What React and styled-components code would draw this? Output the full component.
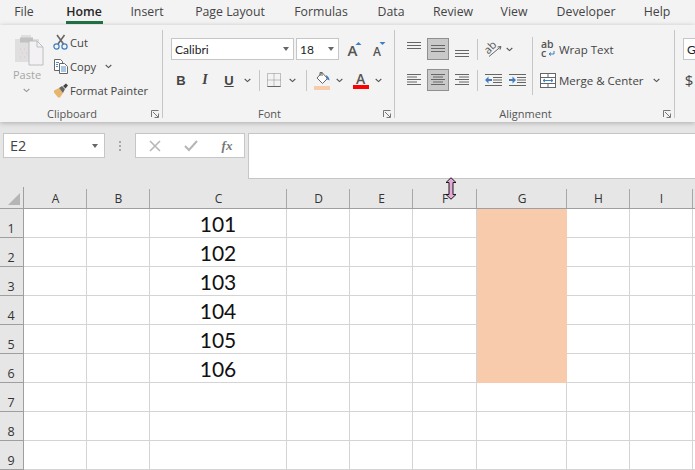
import React from "react";
import styled, { createGlobalStyle } from "styled-components";

const Global = createGlobalStyle`
  html, body { margin: 0; padding: 0; background: #fff; }
  body { width: 695px; height: 470px; overflow: hidden; font-family: "Open Sans", "Liberation Sans", sans-serif; }
  * { box-sizing: border-box; }
`;

const Page = styled.div`
  position: relative;
  width: 695px;
  height: 470px;
  overflow: hidden;
  display: flex;
  flex-direction: column;
  background: #e6e6e6;
`;

const TabBar = styled.div`
  display: flex;
  height: 25px;
  background: #f3f3f3;
  flex: none;
`;
const Tab = styled.div`
  position: relative;
  width: ${p => p.$w}px;
  flex: none;
  text-align: center;
  font-size: 12.3px;
  line-height: 24px;
  color: ${p => (p.$active ? "#262626" : "#444")};
  font-weight: ${p => (p.$active ? 600 : 400)};
  white-space: nowrap;
`;
const TabLine = styled.div`
  position: absolute;
  left: 18px;
  right: 17px;
  top: 21px;
  height: 3px;
  background: #217346;
`;

const Ribbon = styled.div`
  display: flex;
  flex: none;
  height: 97px;
  background: #f3f3f3;
  box-shadow: 0 1px 5px rgba(0, 0, 0, 0.25);
  position: relative;
  z-index: 1;
`;
const Group = styled.div`
  position: relative;
  width: ${p => p.$w}px;
  flex: none;
  height: 88px;
  margin-top: 5px;
  border-right: ${p => (p.$open ? "none" : "1px solid #c6c6c6")};
  display: flex;
  flex-direction: column;
`;
const GroupBody = styled.div`
  flex: 1;
  display: flex;
  min-height: 0;
  padding-left: ${p => p.$pad || 0}px;
`;
const GroupLabel = styled.div`
  height: 16px;
  margin-bottom: -4px;
  padding-right: 18px;
  text-align: center;
  font-size: 11px;
  line-height: 16px;
  color: #555;
`;
const Launcher = styled.svg`
  position: absolute;
  right: 3px;
  bottom: 0;
  width: 8px;
  height: 8px;
`;

const PasteCol = styled.div`
  width: 39px;
  margin-left: 13px;
  flex: none;
  display: flex;
  flex-direction: column;
  align-items: flex-start;
`;
const PasteLabel = styled.div`
  font-size: 11px;
  color: #a6a6a6;
  line-height: 16px;
  margin-top: 2px;
  margin-bottom: 1px;
`;
const SmallCol = styled.div`
  display: flex;
  flex-direction: column;
`;
const SmallRow = styled.div`
  display: flex;
  align-items: center;
  height: 24px;
  font-size: 11.2px;
  color: #444;
  white-space: nowrap;
`;
const IconCell = styled.div`
  width: ${p => p.$w}px;
  height: ${p => p.$h || 22}px;
  flex: none;
  display: flex;
  align-items: center;
  justify-content: center;
  background: ${p => (p.$on ? "#c9c9c9" : "transparent")};
  border: ${p => (p.$on ? "1px solid #8f8f8f" : "none")};
  font-size: ${p => p.$size || 13}px;
  color: #444;
  margin-top: ${p => p.$mt || 0}px;
  svg { flex: none; overflow: visible; }
`;
const Stack = styled.div`
  display: flex;
  flex-direction: column;
  padding-top: 8px;
  gap: 9px;
`;
const Line = styled.div`
  display: flex;
  align-items: center;
  height: 22px;
  margin-left: ${p => p.$left || 0}px;
`;
const Combo = styled.div`
  width: ${p => p.$w}px;
  height: 22px;
  flex: none;
  background: #fff;
  border: 1px solid #c6c6c6;
  margin-right: ${p => p.$mr || 0}px;
  display: flex;
  align-items: center;
  justify-content: space-between;
  padding: 0 4px 0 3px;
  font-family: Lato, "Open Sans", sans-serif;
  font-size: 12px;
  color: #222;
  white-space: nowrap;
  overflow: hidden;
`;
const Caret = styled.div`
  width: 0;
  height: 0;
  flex: none;
  border-left: 3.5px solid transparent;
  border-right: 3.5px solid transparent;
  border-top: 4px solid #666;
`;
const Divider = styled.div`
  width: 1px;
  height: 21px;
  background: #c6c6c6;
  flex: none;
`;
const BoldLetter = styled.span`
  font-family: "Liberation Sans", sans-serif;
  font-weight: 700;
  color: #444;
  font-size: 13px;
`;
const ItalicLetter = styled(BoldLetter)`
  font-style: italic;
  font-family: "Liberation Serif", serif;
  font-size: 14px;
`;
const UnderLetter = styled(BoldLetter)`
  text-decoration: underline;
  text-underline-offset: 1px;
`;
const WrapLabel = styled.span`
  margin-left: 3px;
  font-size: 11.5px;
  color: #444;
  white-space: nowrap;
`;
const VRule = styled.div`
  width: 1px;
  height: 58px;
  margin: 7px 0 0 6px;
  background: #c6c6c6;
  flex: none;
`;

const FormulaBar = styled.div`
  display: flex;
  flex: none;
  height: 54px;
  margin-top: 11px;
`;
const NameBox = styled.div`
  width: 102px;
  height: 25px;
  margin-left: 3px;
  flex: none;
  background: #fff;
  border: 1px solid #c6c6c6;
  display: flex;
  align-items: center;
  justify-content: space-between;
  padding: 0 6px;
  font-size: 14.5px;
  color: #444;
`;
const Grip = styled.div`
  width: 30px;
  height: 25px;
  flex: none;
  display: flex;
  flex-direction: column;
  align-items: center;
  justify-content: center;
  gap: 2px;
`;
const GripDot = styled.div`
  width: 2px;
  height: 2px;
  background: #a8a8a8;
`;
const FormulaBtns = styled.div`
  width: 110px;
  height: 25px;
  flex: none;
  background: #fff;
  border: 1px solid #c6c6c6;
  display: flex;
  align-items: center;
  padding-left: 1px;
`;
const FxBtn = styled.div`
  width: 36px;
  flex: none;
  display: flex;
  justify-content: center;
  align-items: center;
  font-family: "Liberation Serif", serif;
  font-style: italic;
  font-weight: 700;
  font-size: 13px;
  color: #777;
`;
const FormulaInput = styled.div`
  flex: 1;
  margin-left: 3px;
  height: 46px;
  background: #fff;
  border: 1px solid #c6c6c6;
  border-right: none;
`;

const Sheet = styled.div`
  display: grid;
  grid-template-columns: 24px 63px 63px 137px 63px 63px 64px 90px 63px 63px 20px;
  grid-template-rows: 22px repeat(9, 29px);
  flex: none;
  background: #fff;
`;
const Corner = styled.div`
  background: #e6e6e6;
  border-right: 1px solid #9f9f9f;
  border-bottom: 1px solid #9f9f9f;
  position: relative;
`;
const CornerTri = styled.div`
  position: absolute;
  right: 3px;
  bottom: 3px;
  width: 0;
  height: 0;
  border-left: 12px solid transparent;
  border-bottom: 12px solid #b5b5b5;
`;
const ColHead = styled.div`
  background: #e6e6e6;
  border-bottom: 1px solid #9f9f9f;
  position: relative;
  display: flex;
  justify-content: center;
  align-items: flex-end;
  font-size: 12px;
  line-height: 18px;
  color: #333;
  &::after {
    content: "";
    position: absolute;
    right: 0;
    top: 2px;
    bottom: 0;
    width: 1px;
    background: #a8a8a8;
  }
`;
const RowHead = styled.div`
  background: #e6e6e6;
  border-right: 1px solid #9f9f9f;
  border-bottom: 1px solid #9f9f9f;
  display: flex;
  justify-content: center;
  align-items: flex-end;
  padding-right: 1px;
  font-size: 12.5px;
  line-height: 17px;
  color: #333;
`;
const Cell = styled.div`
  background: ${p => (p.$fill ? "#f8cbad" : "#fff")};
  border-right: 1px solid ${p => (p.$fill ? "#f8cbad" : "#d4d4d4")};
  border-bottom: 1px solid ${p => (p.$fill ? "#f8cbad" : "#d4d4d4")};
  display: flex;
  justify-content: center;
  align-items: flex-end;
  font-family: Lato, "Open Sans", sans-serif;
  font-size: 21px;
  line-height: 26px;
  color: #111;
`;
const Cursor = styled.svg`
  position: absolute;
  left: 445px;
  top: 177px;
  width: 12px;
  height: 23px;
  z-index: 3;
`;

const Chev = ({ c = "#555" }) => (
  <svg width="7" height="5" viewBox="0 0 7 5"><path d="M.7 1l2.8 2.6L6.3 1" fill="none" stroke={c} strokeWidth="1.1" /></svg>
);
const Launch = () => (
  <Launcher viewBox="0 0 8 8"><path d="M.5 7V.5H7.5M7.5 3.5V7.5H3.5M2 2l5 5" fill="none" stroke="#777" strokeWidth="1" /></Launcher>
);
const PasteIcon = () => (
  <svg width="28" height="30" viewBox="0 0 28 30">
    <path d="M0 4h6V0h10v4h8v23H0z" fill="#dfdfdf" />
    <rect x="5" y="2.5" width="13" height="5" fill="#c2c2c2" />
    <path d="M14 6h8l6 6v18H14z" fill="#f4f1f5" stroke="#bdbdbd" />
    <path d="M22 6v6h6" fill="none" stroke="#bdbdbd" />
    <path d="M5 14h1M9 14h1M7 18h1M11 18h1M5 22h1M9 22h1" stroke="#e9bcd8" />
  </svg>
);
const CutIcon = () => (
  <svg width="16" height="16" viewBox="0 0 16 16">
    <path d="M4 1l6.5 9M11.5 1L5 10" stroke="#666" strokeWidth="1.6" fill="none" />
    <circle cx="3.5" cy="12.5" r="2.6" fill="none" stroke="#3f7fbf" strokeWidth="1.2" />
    <circle cx="11.5" cy="12.5" r="2.6" fill="none" stroke="#3f7fbf" strokeWidth="1.2" />
  </svg>
);
const CopyIcon = () => (
  <svg width="16" height="16" viewBox="0 0 16 16">
    <path d="M1.5 1.5h6l2 2v9h-8z" fill="#fff" stroke="#666" />
    <path d="M6.5 5.5h5l3 3v7h-8z" fill="#fff" stroke="#666" />
    <path d="M8 9h5M8 11h5M8 13h5M3 4.5h3M3 6.5h2M3 8.5h2" stroke="#3f7fbf" strokeWidth=".9" />
  </svg>
);
const BrushIcon = () => (
  <svg width="16" height="15" viewBox="0 0 16 15">
    <path d="M1 7.5l5-2.5 4 5-3 4.5H5L1 9.5z" fill="#e8b56c" />
    <path d="M6 5l3-2 3 3-2 4z" fill="#666" />
    <path d="M10 3l3-2.5 2 2-2.5 3z" fill="#444" />
  </svg>
);
const GrowIcon = () => (
  <svg width="20" height="15" viewBox="0 0 20 15">
    <text x="2.5" y="13.5" fontFamily="Open Sans" fontSize="15" fontWeight="600" fill="#555">A</text>
    <path d="M10.5 3h6l-3-3z" fill="#3f7fbf" />
  </svg>
);
const ShrinkIcon = () => (
  <svg width="20" height="15" viewBox="0 0 20 15">
    <text x="7" y="13.5" fontFamily="Open Sans" fontSize="12" fontWeight="600" fill="#555">A</text>
    <path d="M13.5 0h6l-3 3z" fill="#3f7fbf" />
  </svg>
);
const BorderIcon = () => (
  <svg width="14" height="14" viewBox="0 0 14 14">
    <path d="M.5.5h13v13H.5zM7 .5v13M.5 7h13" fill="none" stroke="#8a8a8a" strokeDasharray="1 1" />
    <path d="M.5 13.5h13" stroke="#666" />
  </svg>
);
const FillIcon = () => (
  <svg width="17" height="19" viewBox="0 0 17 19">
    <path d="M8 1.5l5.5 6-5 5L3 7z" fill="#fff" stroke="#666" />
    <path d="M6 5V1.5h2V5" fill="none" stroke="#666" />
    <path d="M12 4c2 1 3.5 3 3.5 5.5L12.5 8z" fill="#3f7fbf" />
    <rect x="0" y="15" width="16" height="4" fill="#f8cbad" />
  </svg>
);
const ColorA = () => (
  <svg width="17" height="18" viewBox="0 0 17 18">
    <text x="3" y="13" fontFamily="Open Sans" fontSize="14" fontWeight="600" fill="#555">A</text>
    <rect x="0" y="14" width="16" height="4" fill="#f00" />
  </svg>
);
const AlignV = ({ y }) => (
  <svg width="14" height="14" viewBox="0 0 14 14">
    {[0, 3, 6].map(d => <path key={d} d={`M0 ${y + d + .5}h14`} stroke="#666" />)}
  </svg>
);
const AlignH = ({ kind }) => {
  const rows = [14, 10, 14, 10, 14];
  return (
    <svg width="14" height="12" viewBox="0 0 14 12">
      {rows.map((len, i) => {
        const x = kind === "l" ? 0 : kind === "r" ? 14 - len : (14 - len) / 2;
        return <path key={i} d={`M${x} ${i * 2.5 + .5}h${len}`} stroke="#666" />;
      })}
    </svg>
  );
};
const OrientIcon = () => (
  <svg width="18" height="18" viewBox="0 0 18 18">
    <text x="0" y="11" fontFamily="Open Sans" fontSize="11" fill="#555" transform="rotate(-45 6 9)">ab</text>
    <path d="M4 16.5l12-10M16 6.5l-3.5.5M16 6.5l-1 3.2" stroke="#666" fill="none" />
  </svg>
);
const IndentIcon = ({ dir }) => (
  <svg width="17" height="12" viewBox="0 0 17 12">
    <path d="M0 .5h17M8 3.5h9M8 6h9M8 8.5h9M0 11.5h17" stroke="#666" />
    <path d={dir < 0 ? "M0 6l3.5-3.5V5H7v2H3.5v2.5z" : "M7 6L3.5 2.5V5H0v2h3.5v2.5z"} fill="#3f7fbf" />
  </svg>
);
const WrapIcon = () => (
  <svg width="15" height="18" viewBox="0 0 15 18">
    <text fontFamily="Open Sans" fontSize="10.5" fontWeight="600" fill="#555">
      <tspan x="0" y="8">ab</tspan>
      <tspan x="0" y="17">c</tspan>
    </text>
    <path d="M13 11v3H8M8 14l2-1.5M8 14l2 1.5" stroke="#3f7fbf" fill="none" />
  </svg>
);
const MergeIcon = () => (
  <svg width="16" height="15" viewBox="0 0 16 15">
    <rect x=".5" y=".5" width="15" height="14" fill="#fff" stroke="#666" />
    <path d="M.5 4.5h15M.5 10.5h15M8 .5v4M8 10.5v4" stroke="#666" />
    <path d="M3 7.5h10M3 7.5l2-1.5M3 7.5l2 1.5M13 7.5l-2-1.5M13 7.5l-2 1.5" stroke="#3f7fbf" fill="none" />
  </svg>
);
const XIcon = () => (
  <svg width="12" height="12" viewBox="0 0 12 12"><path d="M1 1l10 10M11 1L1 11" stroke="#b5b5b5" strokeWidth="1.5" /></svg>
);
const CheckIcon = () => (
  <svg width="14" height="12" viewBox="0 0 14 12"><path d="M1 6l4 4 8-9" stroke="#b5b5b5" strokeWidth="2" fill="none" /></svg>
);

const tabs = [["File", 48], ["Home", 72], ["Insert", 54], ["Page Layout", 112], ["Formulas", 70], ["Data", 70], ["Review", 54], ["View", 68], ["Developer", 76], ["Help", 66]];
const cols = ["A", "B", "C", "D", "E", "F", "G", "H", "I", ""];
const values = [101, 102, 103, 104, 105, 106];

export default function App() {
  return (
    <Page>
      <Global />
      <TabBar>
        {tabs.map(([t, w]) => (
          <Tab key={t} $w={w} $active={t === "Home"}>
            {t}
            {t === "Home" && <TabLine />}
          </Tab>
        ))}
      </TabBar>
      <Ribbon>
        <Group $w={163}>
          <GroupBody>
            <PasteCol>
              <IconCell $w={32} $h={30} $mt={5}><PasteIcon /></IconCell>
              <PasteLabel>Paste</PasteLabel>
              <IconCell $w={26} $h={12}><Chev c="#999" /></IconCell>
            </PasteCol>
            <SmallCol>
              <SmallRow><IconCell $w={18}><CutIcon /></IconCell>Cut</SmallRow>
              <SmallRow><IconCell $w={18}><CopyIcon /></IconCell>Copy<IconCell $w={24} $h={10}><Chev /></IconCell></SmallRow>
              <SmallRow><IconCell $w={18}><BrushIcon /></IconCell>Format Painter</SmallRow>
            </SmallCol>
          </GroupBody>
          <GroupLabel>Clipboard</GroupLabel>
          <Launch />
        </Group>
        <Group $w={232}>
          <GroupBody $pad={8}>
            <Stack>
              <Line>
                <Combo $w={123} $mr={2}>Calibri<Caret /></Combo>
                <Combo $w={43} $mr={5}>18<Caret /></Combo>
                <IconCell $w={21}><GrowIcon /></IconCell>
                <IconCell $w={21}><ShrinkIcon /></IconCell>
              </Line>
              <Line $left={-2}>
                <IconCell $w={24}><BoldLetter>B</BoldLetter></IconCell>
                <IconCell $w={24}><ItalicLetter>I</ItalicLetter></IconCell>
                <IconCell $w={24}><UnderLetter>U</UnderLetter></IconCell>
                <IconCell $w={13}><Chev /></IconCell>
                <IconCell $w={5} />
                <Divider />
                <IconCell $w={28}><BorderIcon /></IconCell>
                <IconCell $w={8}><Chev /></IconCell>
                <IconCell $w={10} />
                <Divider />
                <IconCell $w={30}><FillIcon /></IconCell>
                <IconCell $w={4}><Chev /></IconCell>
                <IconCell $w={4} />
                <IconCell $w={32}><ColorA /></IconCell>
                <IconCell $w={2}><Chev /></IconCell>
              </Line>
            </Stack>
          </GroupBody>
          <GroupLabel>Font</GroupLabel>
          <Launch />
        </Group>
        <Group $w={280}>
          <GroupBody $pad={10}>
            <Stack>
              <Line>
                <IconCell $w={18}><AlignV y={0} /></IconCell>
                <IconCell $w={4} />
                <IconCell $w={22} $on><AlignV y={3} /></IconCell>
                <IconCell $w={6} />
                <IconCell $w={14}><AlignV y={8} /></IconCell>
                <IconCell $w={8} />
                <Divider />
                <IconCell $w={3} />
                <IconCell $w={26}><OrientIcon /></IconCell>
                <IconCell $w={4}><Chev /></IconCell>
              </Line>
              <Line>
                <IconCell $w={18}><AlignH kind="l" /></IconCell>
                <IconCell $w={4} />
                <IconCell $w={22} $on><AlignH kind="c" /></IconCell>
                <IconCell $w={6} />
                <IconCell $w={14}><AlignH kind="r" /></IconCell>
                <IconCell $w={8} />
                <Divider />
                <IconCell $w={30}><IndentIcon dir={-1} /></IconCell>
                <IconCell $w={18}><IndentIcon dir={1} /></IconCell>
              </Line>
            </Stack>
            <VRule />
            <Stack>
              <Line $left={7}>
                <IconCell $w={16}><WrapIcon /></IconCell>
                <WrapLabel>Wrap Text</WrapLabel>
              </Line>
              <Line $left={7}>
                <IconCell $w={16}><MergeIcon /></IconCell>
                <WrapLabel>Merge &amp; Center</WrapLabel>
                <IconCell $w={26}><Chev /></IconCell>
              </Line>
            </Stack>
          </GroupBody>
          <GroupLabel>Alignment</GroupLabel>
          <Launch />
        </Group>
        <Group $w={20} $open>
          <GroupBody $pad={8}>
            <Stack>
              <Line><Combo $w={40}>G</Combo></Line>
              <Line><IconCell $w={12} $size={15}>$</IconCell></Line>
            </Stack>
          </GroupBody>
        </Group>
      </Ribbon>
      <FormulaBar>
        <NameBox>E2<Caret /></NameBox>
        <Grip><GripDot /><GripDot /><GripDot /></Grip>
        <FormulaBtns>
          <FxBtn><XIcon /></FxBtn>
          <FxBtn><CheckIcon /></FxBtn>
          <FxBtn>fx</FxBtn>
        </FormulaBtns>
        <FormulaInput />
      </FormulaBar>
      <Sheet>
        <Corner><CornerTri /></Corner>
        {cols.map(c => <ColHead key={c}>{c}</ColHead>)}
        {Array.from({ length: 9 }, (_, r) => (
          <React.Fragment key={r}>
            <RowHead>{r + 1}</RowHead>
            {cols.map(c => (
              <Cell key={c} $fill={c === "G" && r < 6}>
                {c === "C" && r < 6 ? values[r] : ""}
              </Cell>
            ))}
          </React.Fragment>
        ))}
      </Sheet>
      <Cursor viewBox="0 0 12 25" preserveAspectRatio="none">
        <path d="M6 .8L11 6H8v13h3l-5 5.2L1 19h3V6H1z" fill="#e4a9d8" stroke="#111" strokeWidth="1" />
      </Cursor>
    </Page>
  );
}
